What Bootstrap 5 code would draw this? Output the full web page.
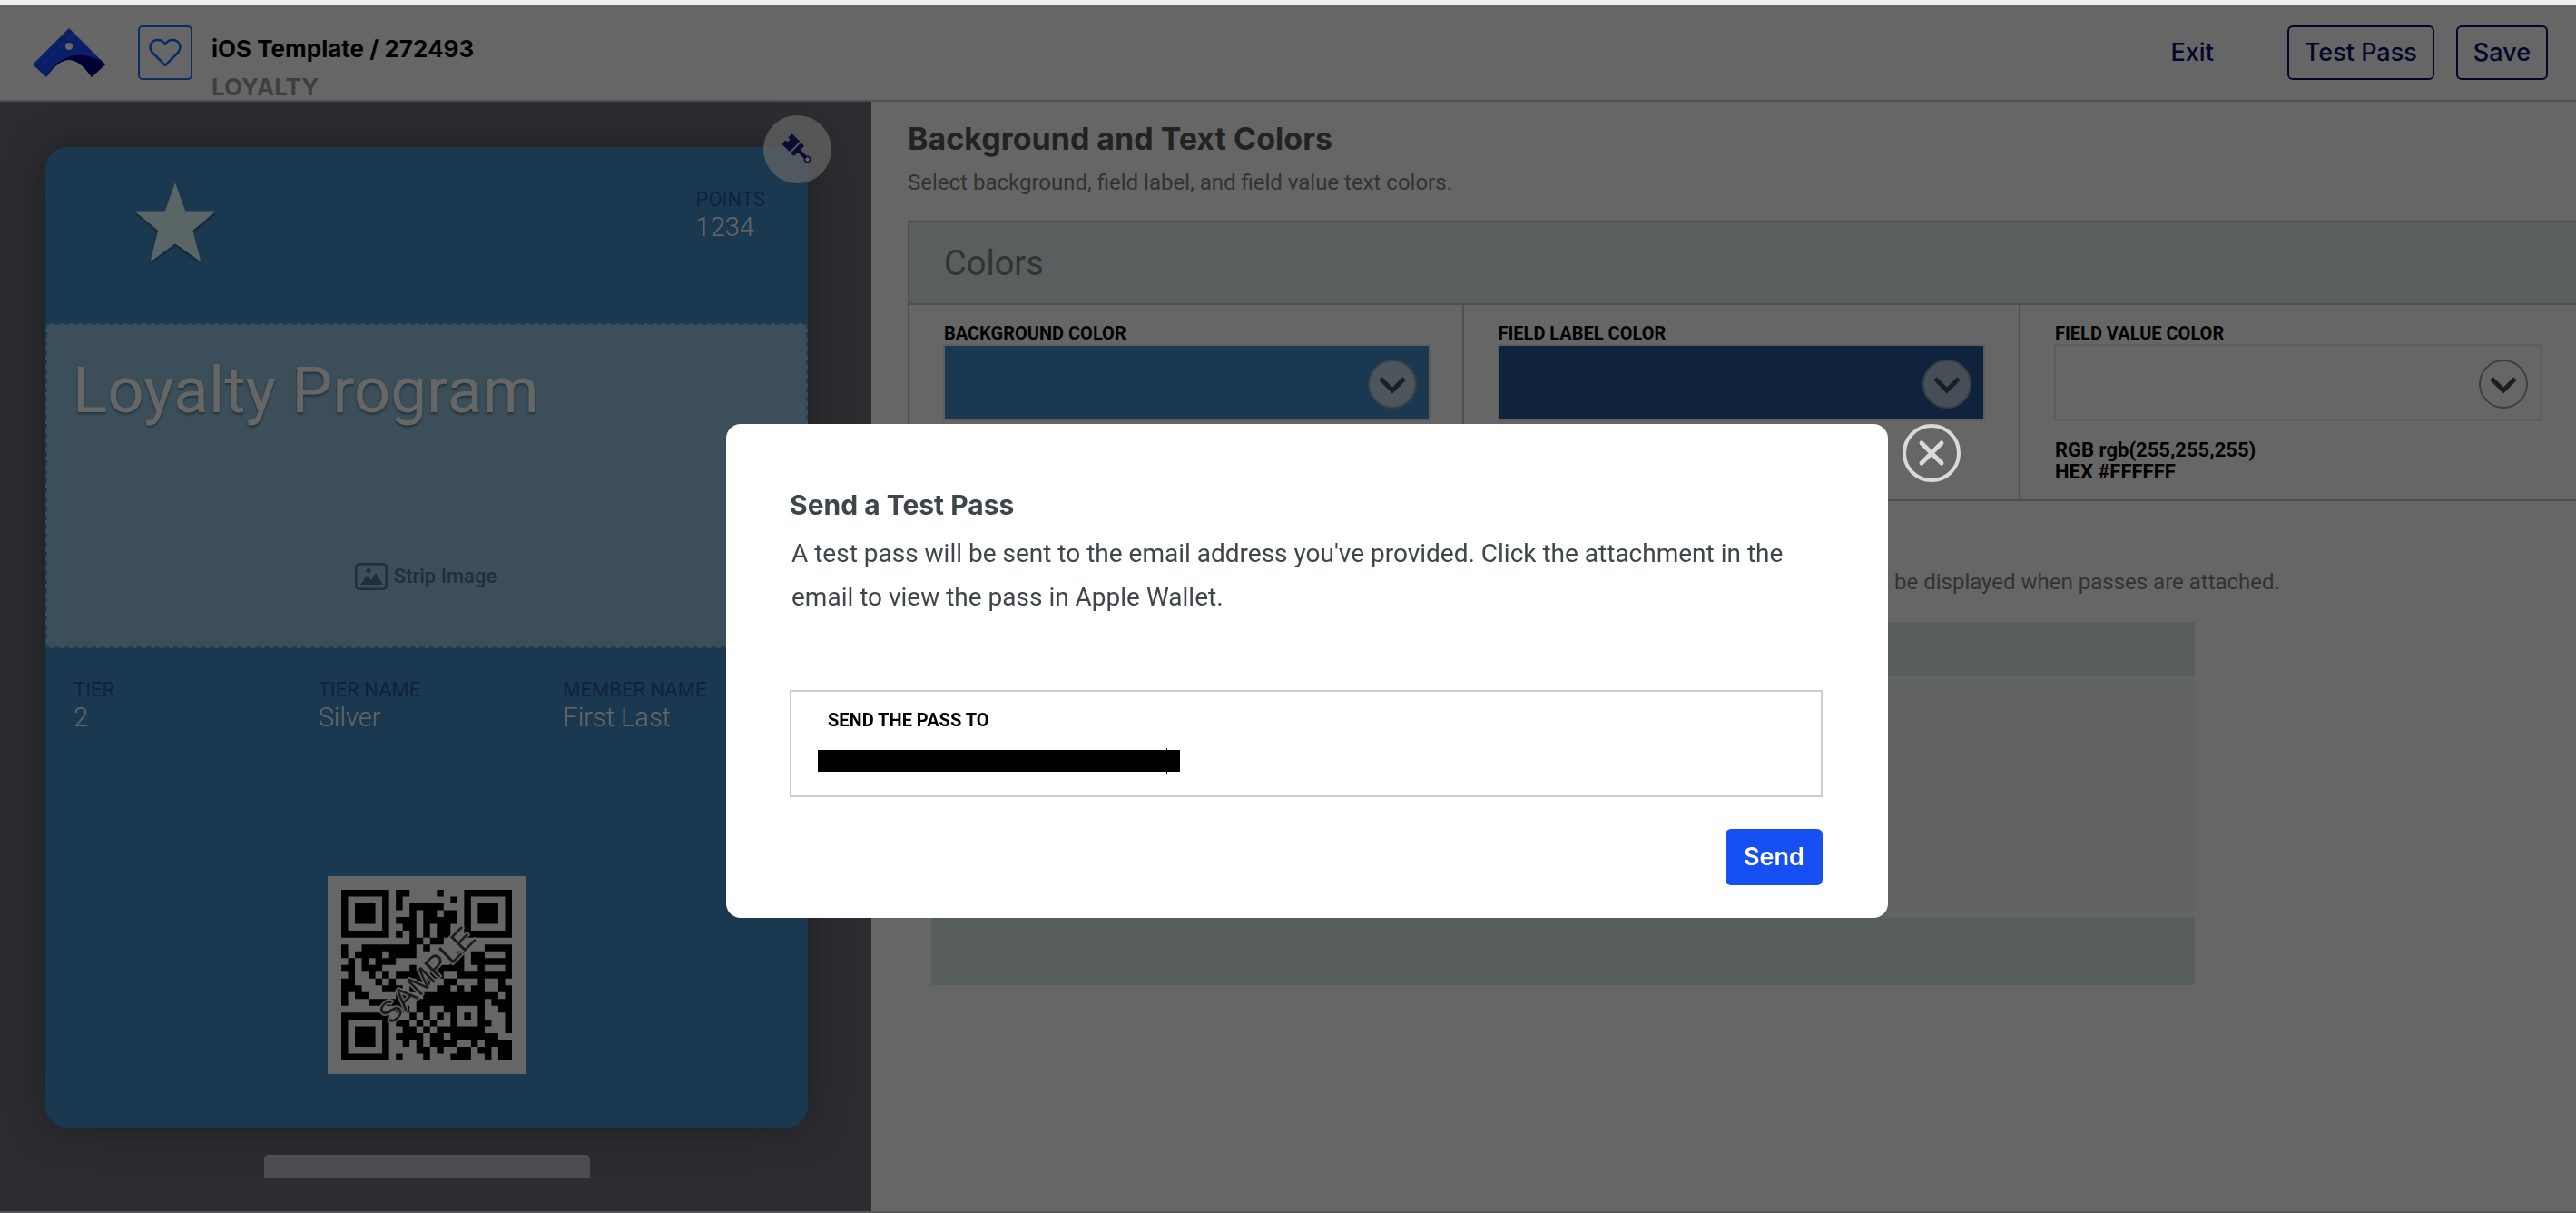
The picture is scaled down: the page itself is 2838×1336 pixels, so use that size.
<!doctype html>
<html lang="en">
<head>
<meta charset="utf-8">
<title>iOS Template</title>
<link href="https://cdn.jsdelivr.net/npm/bootstrap@5.3.0/dist/css/bootstrap.min.css" rel="stylesheet">
<style>
html,body{height:100%;overflow:hidden}
body{background:#555;font-family:Roboto,"Liberation Sans",sans-serif;color:#555}
.top-strip{height:5px;background:#f0f0f0}
.app-shell{height:1329px;background:#fff;display:flex;flex-direction:column;overflow:hidden}
.hd-font{font-family:Inter,"Liberation Sans",sans-serif}
.app-head{height:107px;flex:none;border-bottom:2px solid #c6c6c6;padding:23px 31px 0 36px;background:#fff}
.logo-mark{width:80px;height:54px;margin-top:3px}
.type-box{width:60px;height:60px;border:2.5px solid #1e69ff;border-radius:5px;margin-left:36px}
.pass-title{margin-left:21px;font-weight:700;font-size:26px;line-height:34px;color:#000;margin-top:9px}
.pass-kind{color:#9e9e9e;line-height:34px;margin-top:8px}
.head-btn{font-size:27px;font-weight:500;color:#080a69;border:2.5px solid #080a69;border-radius:6px;height:60px;padding:0 17px;line-height:54px;background:transparent}
.head-link{border-color:transparent;padding:0;margin-right:55px}
.side-col{width:960px;flex:none;background:#6e707a;display:flex;flex-direction:column;position:relative}
.side-scroll{height:1186px;overflow:hidden;flex:none;padding:50px 70px 0 50px}
.pass-card{height:1080px;background:#418cc5;border-radius:24px;box-shadow:0 0 45px rgba(0,0,0,.35);display:flex;flex-direction:column}
.pass-top{height:194px;flex:none;padding-left:99px;padding-right:47px;padding-top:40px}
.star-art{width:88px;height:86px;filter:drop-shadow(0 2px 1px rgba(0,0,0,.35))}
.pts-block{margin-top:5px}
.fld-label{font-size:22px;line-height:26px;color:#285896}
.fld-val{font-size:29px;line-height:34px;color:#fff;font-weight:300}
.strip-zone{height:358px;flex:none;background:#93c3e1;border:2px dashed #4a9fd5;padding:32px 28px 0 28px;position:relative;display:flex;flex-direction:column}
.strip-title{font-size:71px;line-height:80px;color:#fff;text-shadow:0 2px 3px rgba(0,0,0,.4)}
.strip-hint{margin-top:auto;padding-bottom:62px;color:#4d7598;font-size:22px;font-weight:500;line-height:30px;align-self:center;gap:7px;margin-left:-2px}
.fld-row{padding:33px 0 0 31px}
.fld-cell{width:270.5px}
.qr-tile{width:218px;height:218px;display:block;margin:158px auto 0}
.back-btn{display:block;width:359px;height:70px;margin:30px 0 0 241px;background:#bcbec5;border:0;border-radius:5px 5px 0 0;font-size:30px;color:#444;padding:10px 0 0;line-height:36px;border-top:2px solid #c9cbd0}
.paint-fab{position:absolute;left:841px;top:15px;width:75px;height:75px;border-radius:50%;background:rgba(255,255,255,.72)}
.main-col{flex:1;min-width:0;overflow:hidden;padding:19px 0 0 40px;position:relative}
.sec-title{font-size:34px;font-weight:700;line-height:44px;margin:0 0 11px;color:#555}
.sec-sub{font-size:24px;line-height:30px;margin:0 0 27px;color:#808080}
.color-box{width:1860px;border-top:2px solid #c6c6c6;border-bottom:2px solid #c6c6c6;border-left:2px solid #c6c6c6}
.color-head{height:91px;background:#dfebeb;border-bottom:2px solid #c6c6c6;font-size:38px;line-height:91px;padding-left:38px;color:#808080}
.color-grid{display:grid;grid-template-columns:610.5px 613.5px 613.5px}
.color-cell{padding:19px 0 19px 38px;border-right:2px solid #c6c6c6;height:214px}
.cell-label{font-size:20px;font-weight:700;line-height:24px;color:#000;white-space:nowrap}
.swatch{width:537px;height:85px;border:2px solid #ececec;position:relative;margin-left:-1px}
.sw-a{background:#418cc5}.sw-b{background:#285896}.sw-c{background:#fff}
.chev{position:absolute;right:13px;top:15px;width:54px;height:54px}
.rgb-lines{font-size:22px;font-weight:700;line-height:24px;margin-top:20px;color:#000}
.thumb-note{font-size:24px;line-height:30px;margin:74px 0 29px;padding-left:1087px;color:#808080;white-space:nowrap}
.thumb-frame{margin-left:26px;width:1392px;height:400px;background:#dde8e8;padding:60px 0 74px}
.thumb-inner{height:266px;background:#f5fafa}
.modal-backdrop.dim-layer{top:5px;width:100vw;height:1329px;background:#000}
.modal-backdrop.dim-layer.show{opacity:.6}
.pass-modal{display:block;top:5px}
.pass-modal .modal-dialog{max-width:none;width:1280px;margin:462px 0 0 800px}
.pass-modal .modal-content{border:0;border-radius:16px;padding:71px 72px 36px 70px;height:544px;display:block}
.dlg-title{font-size:30px;font-weight:700;line-height:36px;margin:0 0 12px;color:#3e4649}
.dlg-text{font-size:28px;line-height:48px;color:#3e4649;margin:0 0 78px 2px}
.send-field{height:118px;border:2px solid #c8ced2;padding-top:19px}
.send-label{font-size:20px;font-weight:700;line-height:24px;color:#000;margin:0 0 21px 40px}
.redact-bar{width:399px;height:24px;background:#000;margin-left:29px;position:relative}
.redact-bar::after{content:"";position:absolute;left:384px;top:-2px;width:1px;height:28px;background:#000}
.send-btn{display:block;margin:35px 0 0 auto;width:107px;height:62px;padding:0;border:0;border-radius:6px;background:#1650f5;color:#fff;font-size:27px;font-weight:600}
.close-ring{position:absolute;left:1296px;top:0;width:64px;height:64px;border-radius:50%;border:4px solid #d9d9d9;background:transparent;padding:0}
</style>
</head>
<body>
<div class="top-strip"></div>
<div class="app-shell">
  <header class="app-head d-flex align-items-start">
    <svg class="logo-mark" viewBox="0 0 80 54" aria-hidden="true">
      <path d="M40 0 80 40 65 54C56 41 48 35 40 35S24 41 15 54L0 40Z" fill="#194eff"/>
      <path d="M15 54C26 35 44 21 76 36L80 40 65 54C56 41 48 35 40 35S24 41 15 54Z" fill="#000080"/>
      <circle cx="40" cy="20" r="4" fill="#fff"/>
    </svg>
    <div class="type-box d-flex align-items-center justify-content-center flex-none">
      <svg width="36" height="32" viewBox="0 0 36 32" fill="none" stroke="#1e69ff" stroke-width="2.5"><path d="M18 30 3.5 15.5C-1 9 3 2 10 2c3.500 0 6.500 2 8 5 1.500-3 4.500-5 8-5 7 0 11 7 6.500 13.500Z" stroke-linejoin="round"/></svg>
    </div>
    <div class="pass-title hd-font">iOS Template / 272493<div class="pass-kind">LOYALTY</div></div>
    <div class="ms-auto d-flex gap-4">
      <button class="btn head-btn head-link hd-font" type="button">Exit</button>
      <button class="btn head-btn hd-font" type="button">Test Pass</button>
      <button class="btn head-btn hd-font" type="button">Save</button>
    </div>
  </header>
  <div class="d-flex flex-grow-1" style="min-height:0">
    <aside class="side-col">
      <div class="side-scroll">
        <div class="pass-card">
          <div class="pass-top d-flex justify-content-between">
            <svg class="star-art" viewBox="-1 -1 90 88"><path d="M44 0 55 31H88L63 52 72 86 44 66 17 86 25.500 52 0 31H33Z" fill="#e1fcff" stroke="#e1fcff" stroke-width="1.500" stroke-linejoin="round"/></svg>
            <div class="pts-block"><div class="fld-label">POINTS</div><div class="fld-val">1234</div></div>
          </div>
          <div class="strip-zone">
            <div class="strip-title">Loyalty Program</div>
            <div class="strip-hint d-flex align-items-center">
              <svg width="36" height="30" viewBox="0 0 36 30" fill="none"><rect x="1.300" y="1.300" width="33.400" height="27.400" rx="3.500" stroke="#4d7598" stroke-width="2.500"/><circle cx="15" cy="8.500" r="2.500" fill="#4d7598"/><path d="M6 24 13 14 18 19 23 11 31 24Z" fill="#4d7598"/></svg>
              <span>Strip Image</span>
            </div>
          </div>
          <div class="fld-row d-flex">
            <div class="fld-cell"><div class="fld-label">TIER</div><div class="fld-val">2</div></div>
            <div class="fld-cell"><div class="fld-label">TIER NAME</div><div class="fld-val">Silver</div></div>
            <div class="fld-cell"><div class="fld-label">MEMBER NAME</div><div class="fld-val">First Last</div></div>
          </div>
          <svg class="qr-tile" id="qrTile" viewBox="0 0 218 218">
            <rect width="218" height="218" fill="#fff"/>
            <path id="qrCells" d="" fill="#000"/>
            <text x="109" y="109" text-anchor="middle" dominant-baseline="central" font-family="Liberation Sans, sans-serif" font-size="33" fill="#444" stroke="#fff" stroke-width="3" paint-order="stroke" transform="rotate(-45 109 109)">SAMPLE</text>
          </svg>
        </div>
        <button class="back-btn" type="button">See back of the pass</button>
      </div>
      <button class="paint-fab btn p-0 d-flex align-items-center justify-content-center" type="button" aria-label="Edit colors">
        <svg width="44" height="44" viewBox="-22 -22 44 44"><g transform="rotate(-45)"><path d="M-8-17H-2V-14H2V-17H8V-5H-8Z M-8-3H8V2H-8Z M-2 2H2V12H-2Z" fill="#1c1c78"/><circle cx="0" cy="15" r="3" fill="#fff" stroke="#1c1c78" stroke-width="1.600"/></g></svg>
      </button>
    </aside>
    <main class="main-col">
      <h2 class="sec-title hd-font">Background and Text Colors</h2>
      <p class="sec-sub">Select background, field label, and field value text colors.</p>
      <section class="color-box">
        <div class="color-head">Colors</div>
        <div class="color-grid">
          <div class="color-cell"><div class="cell-label">BACKGROUND COLOR</div><div class="swatch sw-a"><svg class="chev" viewBox="0 0 54 54"><circle cx="27" cy="27" r="26" fill="rgba(255,255,255,.65)" stroke="#929da8" stroke-width="2"/><path d="M14 21 27 34 40 21" fill="none" stroke="#444f55" stroke-width="5"/></svg></div></div>
          <div class="color-cell"><div class="cell-label">FIELD LABEL COLOR</div><div class="swatch sw-b"><svg class="chev" viewBox="0 0 54 54"><circle cx="27" cy="27" r="26" fill="rgba(255,255,255,.65)" stroke="#929da8" stroke-width="2"/><path d="M14 21 27 34 40 21" fill="none" stroke="#444f55" stroke-width="5"/></svg></div></div>
          <div class="color-cell border-0"><div class="cell-label">FIELD VALUE COLOR</div><div class="swatch sw-c"><svg class="chev" viewBox="0 0 54 54"><circle cx="27" cy="27" r="26" fill="rgba(255,255,255,.65)" stroke="#929da8" stroke-width="2"/><path d="M14 21 27 34 40 21" fill="none" stroke="#444f55" stroke-width="5"/></svg></div><div class="rgb-lines">RGB rgb(255,255,255)<br>HEX #FFFFFF</div></div>
        </div>
      </section>
      <p class="thumb-note">be displayed when passes are attached.</p>
      <div class="thumb-frame"><div class="thumb-inner"></div></div>
    </main>
  </div>
</div>
<div class="modal-backdrop dim-layer show"></div>
<div class="modal pass-modal" tabindex="-1" role="dialog" aria-modal="true">
  <div class="modal-dialog">
    <div class="modal-content">
      <h5 class="dlg-title hd-font">Send a Test Pass</h5>
      <p class="dlg-text">A test pass will be sent to the email address you've provided. Click the attachment in the email to view the pass in Apple Wallet.</p>
      <div class="send-field">
        <div class="send-label">SEND THE PASS TO</div>
        <div class="redact-bar"></div>
      </div>
      <button class="send-btn hd-font" type="button">Send</button>
      <button class="close-ring d-flex align-items-center justify-content-center" type="button" aria-label="Close">
        <svg width="32" height="32" viewBox="0 0 32 32"><path d="M5 5 27 27M27 5 5 27" stroke="#d9d9d9" stroke-width="5" stroke-linecap="round"/></svg>
      </button>
    </div>
  </div>
</div>
<script src="https://cdn.jsdelivr.net/npm/bootstrap@5.3.0/dist/js/bootstrap.bundle.min.js"></script>
<script>
var qrRows=[
"1111111011000010001111111",
"1000001010000000101000001",
"1011101010111110001011101",
"1011101000101101101011101",
"1011101011101111101011101",
"1000001001101011001000001",
"1111111010101011001111111",
"0000000000110110000000000",
"1001111111101000000001111",
"1011110111100000010110001",
"0101011100000000110111111",
"1101110000100011110010001",
"0100101011110110011111111",
"1100010100011001100010010",
"1110001110100011010110011",
"1011000011001111111111101",
"1000111110011111111110111",
"0000000011011001100010011",
"1111111000101010101010001",
"1000001011010100100011001",
"1011101001101011111110001",
"1011101011110110111111100",
"1011101001010111100101111",
"1000001000011010011011011",
"1111111010001000111001011"];
var d="",s=7.52,o=15;
qrRows.forEach(function(row,r){for(var c=0;c<row.length;c++){if(row[c]==="1"){d+="M"+(o+c*s)+" "+(o+r*s)+"h"+s+"v"+s+"h-"+s+"z";}}});
document.getElementById("qrCells").setAttribute("d",d);
</script>
</body>
</html>
